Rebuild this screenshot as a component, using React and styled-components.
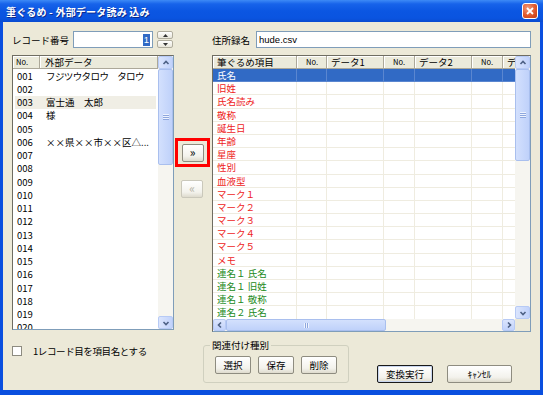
import React from 'react';
import styled, { createGlobalStyle } from 'styled-components';

const GlobalStyle = createGlobalStyle`
  html, body {
    margin: 0;
    padding: 0;
  }
  body {
    width: 543px;
    height: 395px;
    overflow: hidden;
    background: #ece9d8;
    font-family: "Noto Sans CJK JP", "Noto Sans", sans-serif;
    font-size: 9.5px;
    color: #000;
  }
`;

const Window = styled.div`
  width: 543px;
  height: 395px;
  display: flex;
  flex-direction: column;
  background: #0a4fdf;
`;

const TitleBar = styled.div`
  height: 22px;
  flex: none;
  display: flex;
  align-items: center;
  justify-content: space-between;
  padding: 0 5px 0 6px;
  background: linear-gradient(#3d8af6 0%, #1763ea 18%, #0b56e2 50%, #0a54e0 82%, #0a4bd0 100%);
`;

const TitleText = styled.span`
  color: #fff;
  font-weight: bold;
  font-size: 10px;
  letter-spacing: 0.2px;
  text-shadow: 1px 1px 0 #0b2a8c;
`;

const CloseBtn = styled.div`
  width: 16px;
  height: 16px;
  box-sizing: border-box;
  border: 1px solid #fff;
  border-radius: 3px;
  background: radial-gradient(circle at 35% 30%, #f19a7c, #e0582c 55%, #c23c12);
  display: flex;
  align-items: center;
  justify-content: center;
`;

const Frame = styled.div`
  flex: 1;
  margin: 0 3px 5px 3px;
  background: #ece9d8;
  padding: 9px 9px 0 9px;
  display: flex;
  flex-direction: column;
`;

const Columns = styled.div`
  display: grid;
  grid-template-columns: 162px 38px 319px;
`;

const FieldRow = styled.div`
  display: flex;
  align-items: center;
  height: 17px;
`;

const Label = styled.span`
  width: ${p => p.$w}px;
  flex: none;
  white-space: nowrap;
`;

const TextBox = styled.div`
  box-sizing: border-box;
  height: 17px;
  flex: ${p => (p.$w ? 'none' : '1')};
  width: ${p => (p.$w ? `${p.$w}px` : 'auto')};
  border: 1px solid #7f9db9;
  background: #fff;
  display: flex;
  align-items: center;
  justify-content: ${p => (p.$right ? 'flex-end' : 'flex-start')};
  padding: 0 2px;
  font-family: "Liberation Sans", "Noto Sans CJK JP", sans-serif;
  font-size: 9.5px;
`;

const SelText = styled.span`
  background: #316ac5;
  color: #fff;
  padding: 0 1px;
  line-height: 12px;
`;

const Spinner = styled.div`
  width: 16px;
  height: 17px;
  margin-left: 4px;
  display: flex;
  flex-direction: column;
  gap: 1px;
`;

const SpinPart = styled.div`
  flex: 1;
  box-sizing: border-box;
  border: 1px solid #b0ad9e;
  border-radius: 2px;
  background: linear-gradient(#fff, #e8e6da);
  display: flex;
  align-items: center;
  justify-content: center;
`;

const MainRow = styled(Columns)`
  margin-top: 7px;
  height: 277px;
`;

const ListBox = styled.div`
  height: 275px;
  box-sizing: border-box;
  border: 1px solid #7f9db9;
  border-top-color: #6f6d62;
  border-left-color: #6f6d62;
  background: #fff;
  display: flex;
  overflow: hidden;
`;

const ListBody = styled.div`
  flex: 1;
  display: flex;
  flex-direction: column;
  overflow: hidden;
`;

const HeaderRow = styled.div`
  display: flex;
  height: 13px;
  flex: none;
  background: #ebeadb;
`;

const HeadCell = styled.div`
  width: ${p => p.$w}px;
  flex: ${p => (p.$w ? 'none' : '1')};
  box-sizing: border-box;
  border-right: 1px solid #aca899;
  border-bottom: 1px solid #aca899;
  box-shadow: inset 1px 1px 0 #fff;
  padding-left: ${p => p.$pad ?? 4}px;
  font-size: ${p => (p.$small ? 7.5 : 9.5)}px;
  line-height: 12px;
  white-space: nowrap;
  overflow: hidden;
`;

const ListRow = styled.div`
  display: flex;
  height: 13.25px;
  flex: none;
  align-items: center;
  background: ${p => (p.$hl ? '#f0eee5' : 'transparent')};
  margin: 0 2px;
  white-space: nowrap;
`;

const NumCell = styled.span`
  width: 29px;
  flex: none;
  padding-left: 2px;
`;

const DataCell = styled.span`
  flex: 1;
  overflow: hidden;
  letter-spacing: ${p => (p.$tight ? '-0.6px' : '0')};
`;

const VScrollBar = styled.div`
  width: 15px;
  flex: none;
  background: #f6f5f0;
  display: flex;
  flex-direction: column;
`;

const HScrollBar = styled.div`
  height: 12px;
  flex: 1;
  background: #f6f5f0;
  display: flex;
`;

const ArrowBox = styled.div`
  width: ${p => (p.$h ? 13 : 15)}px;
  height: ${p => (p.$h ? 12 : 13)}px;
  flex: none;
  box-sizing: border-box;
  border: 1px solid #b7caf5;
  border-radius: 2px;
  background: linear-gradient(${p => (p.$h ? '180deg' : '90deg')}, #dbe5fd, #c1d2fb);
  display: flex;
  align-items: center;
  justify-content: center;
`;

const Thumb = styled.div`
  flex: none;
  box-sizing: border-box;
  width: ${p => (p.$h ? `${p.$size}px` : 'auto')};
  height: ${p => (p.$h ? 'auto' : `${p.$size}px`)};
  border: 1px solid #a9bfee;
  border-radius: 2px;
  background: linear-gradient(${p => (p.$h ? '180deg' : '90deg')}, #d3e0fd, #bfd1fa);
  display: flex;
  align-items: center;
  justify-content: center;
`;

const Grip = styled.div`
  width: ${p => (p.$h ? 5 : 6)}px;
  height: ${p => (p.$h ? 5 : 6)}px;
  background: ${p =>
    p.$h
      ? 'repeating-linear-gradient(90deg, #eef3fe 0 1px, #8ea7de 1px 2px)'
      : 'repeating-linear-gradient(180deg, #eef3fe 0 1px, #8ea7de 1px 2px)'};
`;

const TrackFill = styled.div`
  flex: 1;
`;

const ButtonCol = styled.div`
  display: flex;
  flex-direction: column;
  align-items: flex-start;
  padding-top: 83px;
  padding-left: 1px;
`;

const Highlight = styled.div`
  width: 35px;
  height: 29px;
  box-sizing: border-box;
  border: 3px solid #ff0000;
  display: flex;
  align-items: center;
  justify-content: center;
`;

const Button = styled.div`
  width: ${p => p.$w}px;
  height: ${p => p.$hgt || 18}px;
  box-sizing: border-box;
  flex: none;
  border: 1px solid ${p => (p.$def ? '#1a1a1a' : p.$off ? '#cac8bb' : '#8e8c80')};
  border-radius: 2px;
  background: linear-gradient(#ffffff, #f3f2ec 70%, #dedbcd);
  box-shadow: ${p => (p.$def ? 'inset 0 0 0 1px #c9d6ef' : 'none')};
  color: ${p => (p.$off ? '#b5b3a6' : '#000')};
  display: flex;
  align-items: center;
  justify-content: center;
  font-size: ${p => p.$fs || 9.5}px;
  white-space: nowrap;
`;

const MoveBtn = styled(Button)`
  margin-left: ${p => p.$ml || 0}px;
  margin-top: ${p => p.$mt || 0}px;
  font-size: 12px;
  line-height: 1;
  padding-bottom: 2px;
`;

const GridBox = styled.div`
  height: 277px;
  box-sizing: border-box;
  border: 1px solid #7f9db9;
  border-top-color: #6f6d62;
  border-left-color: #6f6d62;
  background: #fff;
  display: flex;
  flex-direction: column;
  overflow: hidden;
`;

const GridTop = styled.div`
  flex: 1;
  display: flex;
  overflow: hidden;
`;

const GridBody = styled.div`
  flex: 1;
  display: flex;
  flex-direction: column;
  overflow: hidden;
`;

const GridRow = styled.div`
  display: flex;
  height: 13.2px;
  flex: none;
  background: ${p => (p.$sel ? '#316ac5' : 'transparent')};
  color: ${p => (p.$sel ? '#fff' : p.$color)};
`;

const GridCell = styled.div`
  width: ${p => p.$w}px;
  flex: none;
  box-sizing: border-box;
  border-right: 1px solid ${p => (p.$sel ? '#5a86d0' : '#efece0')};
  border-bottom: 1px solid ${p => (p.$sel ? '#5a86d0' : '#efece0')};
  padding-left: 4px;
  line-height: 12px;
  white-space: nowrap;
  overflow: hidden;
`;

const GridBottom = styled.div`
  display: flex;
  height: 12px;
  flex: none;
`;

const Corner = styled.div`
  width: 15px;
  flex: none;
  background: #ece9d8;
`;

const BottomRow = styled.div`
  display: flex;
  align-items: flex-start;
  margin-top: 8px;
`;

const CheckWrap = styled.div`
  width: 191px;
  flex: none;
  display: flex;
  align-items: center;
  padding-top: 4px;
`;

const CheckBox = styled.div`
  width: 10px;
  height: 10px;
  box-sizing: border-box;
  border: 1px solid #8d8b80;
  background: #fff;
  margin-right: 11px;
`;

const CheckLabel = styled.span`
  letter-spacing: -0.4px;
`;

const GroupBox = styled.fieldset`
  width: 146px;
  height: 43px;
  box-sizing: border-box;
  margin: 0;
  padding: 5px 0 0 11px;
  border: 1px solid #d0d0bf;
  border-radius: 3px;
  display: flex;
  gap: 7px;
  align-items: flex-start;
`;

const Legend = styled.legend`
  padding: 0 2px;
  margin-left: -5px;
  font-size: 9.5px;
  line-height: 11px;
`;

const ActionRow = styled.div`
  display: flex;
  gap: 14px;
  margin-left: 28px;
  margin-top: 25px;
`;

function Chevron({ dir }) {
  const paths = {
    up: 'M1.5 5 L4 2.5 L6.5 5',
    down: 'M1.5 3 L4 5.5 L6.5 3',
    left: 'M5 1.5 L2.5 4 L5 6.5',
    right: 'M3 1.5 L5.5 4 L3 6.5',
  };
  return (
    <svg width="8" height="8" viewBox="0 0 8 8">
      <path d={paths[dir]} fill="none" stroke="#4d6185" strokeWidth="1.6" />
    </svg>
  );
}

function VScroll({ thumb }) {
  return (
    <VScrollBar>
      <ArrowBox><Chevron dir="up" /></ArrowBox>
      <Thumb $size={thumb}><Grip /></Thumb>
      <TrackFill />
      <ArrowBox><Chevron dir="down" /></ArrowBox>
    </VScrollBar>
  );
}

function HScroll({ thumb }) {
  return (
    <HScrollBar>
      <ArrowBox $h><Chevron dir="left" /></ArrowBox>
      <Thumb $h $size={thumb}><Grip $h /></Thumb>
      <TrackFill />
      <ArrowBox $h><Chevron dir="right" /></ArrowBox>
    </HScrollBar>
  );
}

const leftData = {
  1: 'フジツウタロウ　タロウ',
  3: '富士通　太郎',
  4: '様',
  6: '××県××市××区△...',
};

const RED = '#ee1c1c';
const GREEN = '#1b8a1b';

const gridItems = [
  ['氏名', RED],
  ['旧姓', RED],
  ['氏名読み', RED],
  ['敬称', RED],
  ['誕生日', RED],
  ['年齢', RED],
  ['星座', RED],
  ['性別', RED],
  ['血液型', RED],
  ['マーク１', RED],
  ['マーク２', RED],
  ['マーク３', RED],
  ['マーク４', RED],
  ['マーク５', RED],
  ['メモ', RED],
  ['連名１ 氏名', GREEN],
  ['連名１ 旧姓', GREEN],
  ['連名１ 敬称', GREEN],
  ['連名２ 氏名', GREEN],
];

const gridCols = [
  { w: 84, label: '筆ぐるめ項目' },
  { w: 30, label: 'No.', small: true },
  { w: 57, label: 'データ1' },
  { w: 31, label: 'No.', small: true },
  { w: 57, label: 'データ2' },
  { w: 31, label: 'No.', small: true },
  { w: 14, label: 'デ' },
];

export default function App() {
  const rows = Array.from({ length: 20 }, (_, i) => i + 1);
  return (
    <>
      <GlobalStyle />
      <Window>
        <TitleBar>
          <TitleText>筆ぐるめ - 外部データ読み 込み</TitleText>
          <CloseBtn>
            <svg width="8" height="8" viewBox="0 0 8 8">
              <path d="M1 1 L7 7 M7 1 L1 7" stroke="#fff" strokeWidth="1.8" />
            </svg>
          </CloseBtn>
        </TitleBar>
        <Frame>
          <Columns>
            <FieldRow>
              <Label $w={61}>レコード番号</Label>
              <TextBox $w={80} $right><SelText>1</SelText></TextBox>
              <Spinner>
                <SpinPart>
                  <svg width="5" height="3" viewBox="0 0 5 3"><path d="M0 3 L2.5 0 L5 3 Z" fill="#333" /></svg>
                </SpinPart>
                <SpinPart>
                  <svg width="5" height="3" viewBox="0 0 5 3"><path d="M0 0 L2.5 3 L5 0 Z" fill="#333" /></svg>
                </SpinPart>
              </Spinner>
            </FieldRow>
            <div />
            <FieldRow>
              <Label $w={44}>住所録名</Label>
              <TextBox>hude.csv</TextBox>
            </FieldRow>
          </Columns>

          <MainRow>
            <ListBox>
              <ListBody>
                <HeaderRow>
                  <HeadCell $w={27} $pad={3} $small>No.</HeadCell>
                  <HeadCell $pad={5}>外部データ</HeadCell>
                </HeaderRow>
                {rows.map(n => (
                  <ListRow key={n} $hl={n === 3}>
                    <NumCell>{String(n).padStart(3, '0')}</NumCell>
                    <DataCell $tight={n === 1}>{leftData[n] || ''}</DataCell>
                  </ListRow>
                ))}
              </ListBody>
              <VScroll thumb={96} />
            </ListBox>

            <ButtonCol>
              <Highlight>
                <MoveBtn $w={22}>»</MoveBtn>
              </Highlight>
              <MoveBtn $w={22} $off $ml={6} $mt={13}>«</MoveBtn>
            </ButtonCol>

            <GridBox>
              <GridTop>
                <GridBody>
                  <HeaderRow>
                    {gridCols.map((c, i) => (
                      <HeadCell key={i} $w={c.w} $small={c.small} $pad={c.small ? 9 : 4}>
                        {c.label}
                      </HeadCell>
                    ))}
                  </HeaderRow>
                  {gridItems.map(([t, color], i) => (
                    <GridRow key={i} $sel={i === 0} $color={color}>
                      {gridCols.map((c, j) => (
                        <GridCell key={j} $w={c.w} $sel={i === 0}>
                          {j === 0 ? t : ''}
                        </GridCell>
                      ))}
                    </GridRow>
                  ))}
                </GridBody>
                <VScroll thumb={92} />
              </GridTop>
              <GridBottom>
                <HScroll thumb={160} />
                <Corner />
              </GridBottom>
            </GridBox>
          </MainRow>

          <BottomRow>
            <CheckWrap>
              <CheckBox />
              <CheckLabel>1レコード目を項目名とする</CheckLabel>
            </CheckWrap>
            <GroupBox>
              <Legend>関連付け種別</Legend>
              <Button $w={36}>選択</Button>
              <Button $w={36}>保存</Button>
              <Button $w={36}>削除</Button>
            </GroupBox>
            <ActionRow>
              <Button $w={56} $hgt={18} $def>変換実行</Button>
              <Button $w={65} $hgt={18} $fs={9.5}>ｷｬﾝｾﾙ</Button>
            </ActionRow>
          </BottomRow>
        </Frame>
      </Window>
    </>
  );
}
